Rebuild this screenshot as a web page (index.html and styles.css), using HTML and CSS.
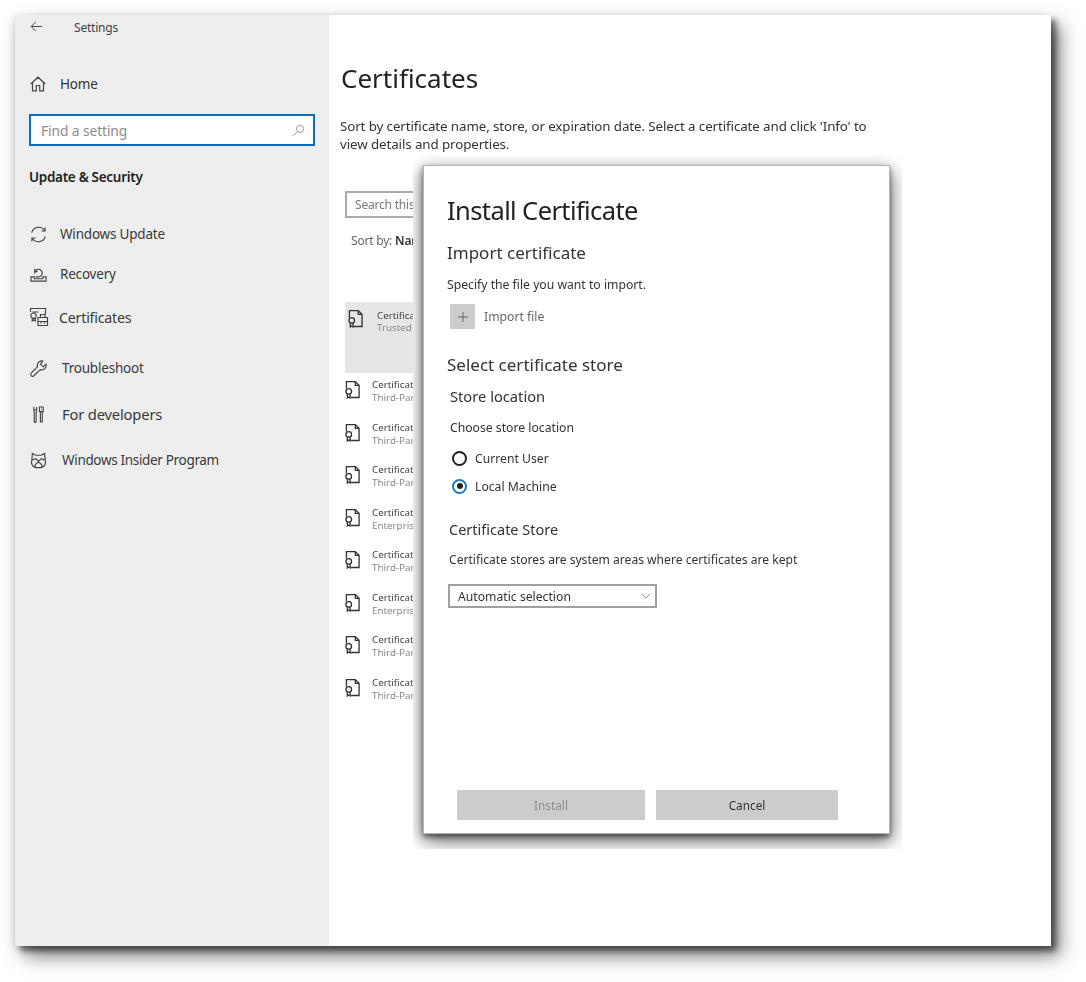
FILE: index.html
```html
<!DOCTYPE html>
<html lang="en">
<head>
<meta charset="utf-8">
<title>Settings - Certificates</title>
<link rel="stylesheet" href="styles.css">
</head>
<body>
<div class="window">
  <aside class="sidebar">
    <div class="app-bar">
      <svg class="ico back" viewBox="0 0 16 16"><path d="M15 8H1.500M7 2.500 1.500 8 7 13.500"/></svg>
      <span>Settings</span>
    </div>
    <div class="home">
      <svg class="ico" viewBox="0 0 16 16"><path d="M.8 8 8 1.200 15.200 8M2.500 6.500v8.300h3.800V9.500h3.400v5.300h3.800V6.500"/></svg>
      <span>Home</span>
    </div>
    <div class="find">
      <span>Find a setting</span>
      <svg class="ico find-ico" viewBox="0 0 16 16"><circle cx="10" cy="6" r="4.500"/><path d="M6.800 9.200 1.500 14.500"/></svg>
    </div>
    <h2 class="group">Update &amp; Security</h2>
    <nav class="nav">
      <div class="nav-row">
        <svg class="ico" viewBox="0 0 18 18"><path d="M1.800 7A7.500 7.500 0 0 1 15.500 5M16.200 11A7.500 7.500 0 0 1 2.500 13M16 1.500v3.800h-3.800M2 16.500v-3.800h3.800"/></svg>
        <span class="lbl">Windows Update</span>
      </div>
      <div class="nav-row">
        <svg class="ico" viewBox="0 0 18 18"><path d="M1 11.500h3.500v2h9v-2H17V16H1zM5 8a4 4 0 1 1 4 3.500H6M5 3v3h3"/></svg>
        <span class="lbl">Recovery</span>
      </div>
      <div class="nav-row tight">
        <svg class="ico wide" viewBox="0 0 20 20"><path d="M1.500 5V1.500h15V7M3.500 5h6M4.500 6a2.700 2.700 0 1 0 .01 0zM3.200 11v3l1.500-1 1.500 1v-3M9 10.500h9.500v8H9zM9 14.500h9.500M11.500 10.500V7.500h4.500v3M12 14.500v2M15.500 14.500v2"/></svg>
        <span class="lbl">Certificates</span>
      </div>
      <div class="nav-row loose">
        <svg class="ico" viewBox="0 0 18 18"><path d="M17 4.500 14 7.200 11 4.500 13.500 1A4.700 4.700 0 0 0 8 7L1.300 14a1.900 1.900 0 0 0 2.800 2.700L11 10.200A4.700 4.700 0 0 0 17 4.500z"/></svg>
        <span class="lbl">Troubleshoot</span>
      </div>
      <div class="nav-row loose dev">
        <svg class="ico" viewBox="0 0 18 18"><path d="M4 1v3h3V1M4 4l.5 3v9.500a1 1 0 0 0 2 0V7L7 4M10 1h4v5h-4zM11 6v11h2V6M11.500 3.500h1"/></svg>
        <span class="lbl">For developers</span>
      </div>
      <div class="nav-row loose insider">
        <svg class="ico" viewBox="0 0 18 18"><path d="M2.500 1.500 6 3.500h6l3.500-2 .5 6.500c1 3.500-.5 7-3.500 8.500h-7C2.500 15 1 11.500 2 8zM1.500 9 6 7l3 3 3-3 4.500 2M5.500 13.500 9 10.500l3.500 3M5.500 16v-2.500M12.500 16v-2.500"/></svg>
        <span class="lbl">Windows Insider Program</span>
      </div>
    </nav>
  </aside>

  <main class="content">
    <h1 class="page-title">Certificates</h1>
    <p class="intro">Sort by certificate name, store, or expiration date. Select a certificate and click 'Info' to view details and properties.</p>
    <div class="search">Search this list</div>
    <div class="sort">Sort by: <b>Name</b></div>
    <div class="cert selected">
      <svg class="cert-ico" viewBox="0 0 16 20"><path d="M6.500 18.500h8.500V5.500L11 1.500H1.500V9M11 1.500v4h4"/><circle cx="4" cy="12" r="3"/><path d="M2.500 15v4l1.500-1 1.500 1v-4"/></svg>
      <div><div class="cert-name">Certificate</div><div class="cert-store">Trusted Root</div></div>
    </div>
    <ul class="cert-list">
      <li class="cert"><svg class="cert-ico" viewBox="0 0 16 20"><path d="M6.500 18.500h8.500V5.500L11 1.500H1.500V9M11 1.500v4h4"/><circle cx="4" cy="12" r="3"/><path d="M2.500 15v4l1.500-1 1.500 1v-4"/></svg><div><div class="cert-name">Certificate</div><div class="cert-store">Third-Party</div></div></li>
      <li class="cert"><svg class="cert-ico" viewBox="0 0 16 20"><path d="M6.500 18.500h8.500V5.500L11 1.500H1.500V9M11 1.500v4h4"/><circle cx="4" cy="12" r="3"/><path d="M2.500 15v4l1.500-1 1.500 1v-4"/></svg><div><div class="cert-name">Certificate</div><div class="cert-store">Third-Party</div></div></li>
      <li class="cert"><svg class="cert-ico" viewBox="0 0 16 20"><path d="M6.500 18.500h8.500V5.500L11 1.500H1.500V9M11 1.500v4h4"/><circle cx="4" cy="12" r="3"/><path d="M2.500 15v4l1.500-1 1.500 1v-4"/></svg><div><div class="cert-name">Certificate</div><div class="cert-store">Third-Party</div></div></li>
      <li class="cert"><svg class="cert-ico" viewBox="0 0 16 20"><path d="M6.500 18.500h8.500V5.500L11 1.500H1.500V9M11 1.500v4h4"/><circle cx="4" cy="12" r="3"/><path d="M2.500 15v4l1.500-1 1.500 1v-4"/></svg><div><div class="cert-name">Certificate</div><div class="cert-store">Enterprise</div></div></li>
      <li class="cert"><svg class="cert-ico" viewBox="0 0 16 20"><path d="M6.500 18.500h8.500V5.500L11 1.500H1.500V9M11 1.500v4h4"/><circle cx="4" cy="12" r="3"/><path d="M2.500 15v4l1.500-1 1.500 1v-4"/></svg><div><div class="cert-name">Certificate</div><div class="cert-store">Third-Party</div></div></li>
      <li class="cert"><svg class="cert-ico" viewBox="0 0 16 20"><path d="M6.500 18.500h8.500V5.500L11 1.500H1.500V9M11 1.500v4h4"/><circle cx="4" cy="12" r="3"/><path d="M2.500 15v4l1.500-1 1.500 1v-4"/></svg><div><div class="cert-name">Certificate</div><div class="cert-store">Enterprise</div></div></li>
      <li class="cert"><svg class="cert-ico" viewBox="0 0 16 20"><path d="M6.500 18.500h8.500V5.500L11 1.500H1.500V9M11 1.500v4h4"/><circle cx="4" cy="12" r="3"/><path d="M2.500 15v4l1.500-1 1.500 1v-4"/></svg><div><div class="cert-name">Certificate</div><div class="cert-store">Third-Party</div></div></li>
      <li class="cert"><svg class="cert-ico" viewBox="0 0 16 20"><path d="M6.500 18.500h8.500V5.500L11 1.500H1.500V9M11 1.500v4h4"/><circle cx="4" cy="12" r="3"/><path d="M2.500 15v4l1.500-1 1.500 1v-4"/></svg><div><div class="cert-name">Certificate</div><div class="cert-store">Third-Party</div></div></li>
    </ul>
  </main>

  <div class="dialog-frame">
    <section class="dialog">
      <h2 class="dlg-title">Install Certificate</h2>
      <h3 class="dlg-head">Import certificate</h3>
      <p class="dlg-text">Specify the file you want to import.</p>
      <div class="import">
        <span class="plus"><svg viewBox="0 0 12 12"><path d="M6 0v12M0 6h12"/></svg></span>
        <span>Import file</span>
      </div>
      <h3 class="dlg-head store-head">Select certificate store</h3>
      <h4 class="dlg-sub">Store location</h4>
      <p class="dlg-text choose">Choose store location</p>
      <div class="radio-row first"><span class="radio"></span><span>Current User</span></div>
      <div class="radio-row"><span class="radio on"></span><span>Local Machine</span></div>
      <h4 class="dlg-sub cs-head">Certificate Store</h4>
      <p class="dlg-text cs-text">Certificate stores are system areas where certificates are kept</p>
      <div class="select">
        <span>Automatic selection</span>
        <svg viewBox="0 0 12 7"><path d="M1 1l5 5 5-5"/></svg>
      </div>
      <div class="actions">
        <button class="btn install">Install</button>
        <button class="btn cancel">Cancel</button>
      </div>
    </section>
  </div>
</div>
</body>
</html>
```
FILE: styles.css
```css
* { box-sizing: border-box; }
html, body { margin: 0; background: #fff; }
body {
  width: 1086px;
  height: 982px;
  padding: 15px 35px 36px 15px;
  font-family: "Noto Sans", "Open Sans", sans-serif;
  color: #333;
  overflow: hidden;
}
h1, h2, h3, h4, p, ul { margin: 0; padding: 0; font-weight: 400; }
ul { list-style: none; }

.window {
  position: relative;
  display: flex;
  height: 931px;
  background: #fff;
  filter: blur(.3px);
  box-shadow: 5px 5px 6px rgba(0,0,0,.5), 9px 10px 18px rgba(0,0,0,.5), -3px 1px 8px rgba(0,0,0,.1);
}
.ico { fill: none; stroke: #444; stroke-width: 1.200; flex: none; width: 16px; height: 16px; }

.sidebar { width: 314px; flex: none; background: #eee; padding: 0 14px; }
.app-bar { height: 24px; display: flex; align-items: center; font-size: 12px; letter-spacing: -.2px; color: #444; }
.back { width: 13px; height: 13px; margin: -2px 31px 0 1px; }
.home { display: flex; align-items: center; height: 30px; margin-top: 30px; font-size: 13.500px; letter-spacing: -.2px; padding-left: 1px; }
.home span { margin-left: 14px; }
.find {
  display: flex; align-items: center; justify-content: space-between;
  height: 32px; margin-top: 15px; width: 286px;
  border: 2px solid #0f6cb5; background: #fff; padding: 0 8px 0 10px;
  color: #8c8c8c; font-size: 13.800px; letter-spacing: -.1px;
}
.find-ico { width: 13px; height: 13px; stroke: #999; }
.group { font-size: 13.500px; font-weight: 600; letter-spacing: -.3px; color: #222; margin-top: 20px; line-height: 22px; }
.nav { display: grid; grid-template-rows: 40px 40px 46px 56px 36px 56px; margin-top: 26px; font-size: 13.500px; letter-spacing: -.2px; color: #3a3a3a; }
.nav-row { display: flex; align-items: center; padding-left: 1px; }
.nav-row .ico { width: 17px; height: 17px; }
.nav-row .lbl { margin-left: 13px; }
.nav-row .wide { width: 20px; height: 20px; margin-left: -1px; }
.tight .lbl { margin-left: 10px; font-size: 14.200px; }
.loose .lbl { margin-left: 15px; }
.dev .lbl { font-size: 14.800px; }
.insider .lbl { letter-spacing: -.33px; }

.content { flex: 1; padding: 0 0 0 12px; position: relative; }
.page-title { font-size: 26px; line-height: 40px; margin-top: 43px; color: #222; }
.intro { width: 530px; font-size: 13.350px; letter-spacing: -.1px; line-height: 18px; margin: 19px 0 0 -1px; color: #333; }
.search {
  width: 110px; height: 27px; margin: 38px 0 0 4px;
  border: 2px solid #aaa; font-size: 12px; letter-spacing: -.2px; line-height: 23px; padding-left: 8px; color: #777;
}
.sort { font-size: 12px; letter-spacing: -.2px; margin: 14px 0 0 10px; line-height: 18px; color: #666; }
.sort b { font-weight: 600; color: #333; }
.cert { display: flex; height: 42.500px; padding-left: 4px; overflow: hidden; }
.cert-ico { width: 15px; height: 19px; fill: none; stroke: #333; stroke-width: 1.400; flex: none; margin: 2px 12px 0 0; }
.cert-name { font-size: 9.800px; line-height: 13px; color: #444; white-space: nowrap; }
.cert-store { font-size: 9.800px; line-height: 13px; color: #888; white-space: nowrap; }
.selected { width: 100px; height: 71px; margin: 52px 0 5px 4px; background: #e6e6e6; padding: 7px 0 0 3px; }
.selected .cert-ico { margin: 0 14px 0 0; }
.selected .cert-store { line-height: 12px; }

.dialog-frame {
  position: absolute;
  left: 398px; top: 140px;
  width: 489px; height: 694px;
  padding: 10px 12px 0 10px;
  overflow: hidden;
  background: #fff;
}
.dialog {
  position: relative;
  height: 669px;
  background: #fff;
  border: 1px solid #b5b5b5;
  box-shadow: 0 3px 5px rgba(0,0,0,.45), 3px 8px 18px rgba(0,0,0,.4), -3px 4px 14px rgba(0,0,0,.3);
  padding: 0 0 0 23px;
  color: #333;
}
.dlg-title { font-size: 25.500px; letter-spacing: -.6px; line-height: 36px; margin-top: 26px; color: #222; }
.dlg-head { font-size: 17px; line-height: 24px; margin-top: 13px; }
.dlg-text { font-size: 12.200px; line-height: 18px; margin-top: 11px; }
.import { display: flex; align-items: center; height: 25px; margin: 10px 0 0 3px; font-size: 12.200px; color: #666; }
.plus { width: 25px; height: 25px; background: #ccc; display: flex; align-items: center; justify-content: center; margin-right: 9px; }
.plus svg { width: 10px; height: 10px; fill: none; stroke: #555; stroke-width: 1; }
.store-head { margin-top: 24px; }
.dlg-sub { font-size: 14.700px; line-height: 22px; margin: 8px 0 0 3px; }
.choose { margin: 12px 0 0 3px; }
.radio-row { display: flex; align-items: center; height: 28px; font-size: 12.200px; margin-left: 5px; }
.radio-row.first { margin-top: 7px; }
.radio { width: 15px; height: 15px; border: 2px solid #222; border-radius: 50%; margin-right: 8px; flex: none; position: relative; }
.radio.on { border-color: #1a78b8; }
.radio.on::after { content: ""; position: absolute; inset: 2.500px; background: #222; border-radius: 50%; }
.cs-head { margin: 18px 0 0 2px; font-size: 14.500px; }
.cs-text { margin: 11px 0 0 2px; font-size: 12.100px; }
.select {
  display: flex; align-items: center; justify-content: space-between;
  width: 209px; height: 24px; margin: 15px 0 0 1px;
  border: 2px solid #a0a0a0; padding: 0 4px 0 8px; font-size: 12.200px; color: #333;
}
.select svg { width: 10px; height: 6px; fill: none; stroke: #777; stroke-width: 1; }
.actions { position: absolute; left: 33px; top: 624px; display: flex; gap: 11px; }
.btn { height: 30px; border: 0; background: #ccc; font: inherit; font-size: 11.800px; padding: 0; }
.install { width: 188px; color: #8f8f8f; }
.cancel { width: 182px; color: #333; }
```
